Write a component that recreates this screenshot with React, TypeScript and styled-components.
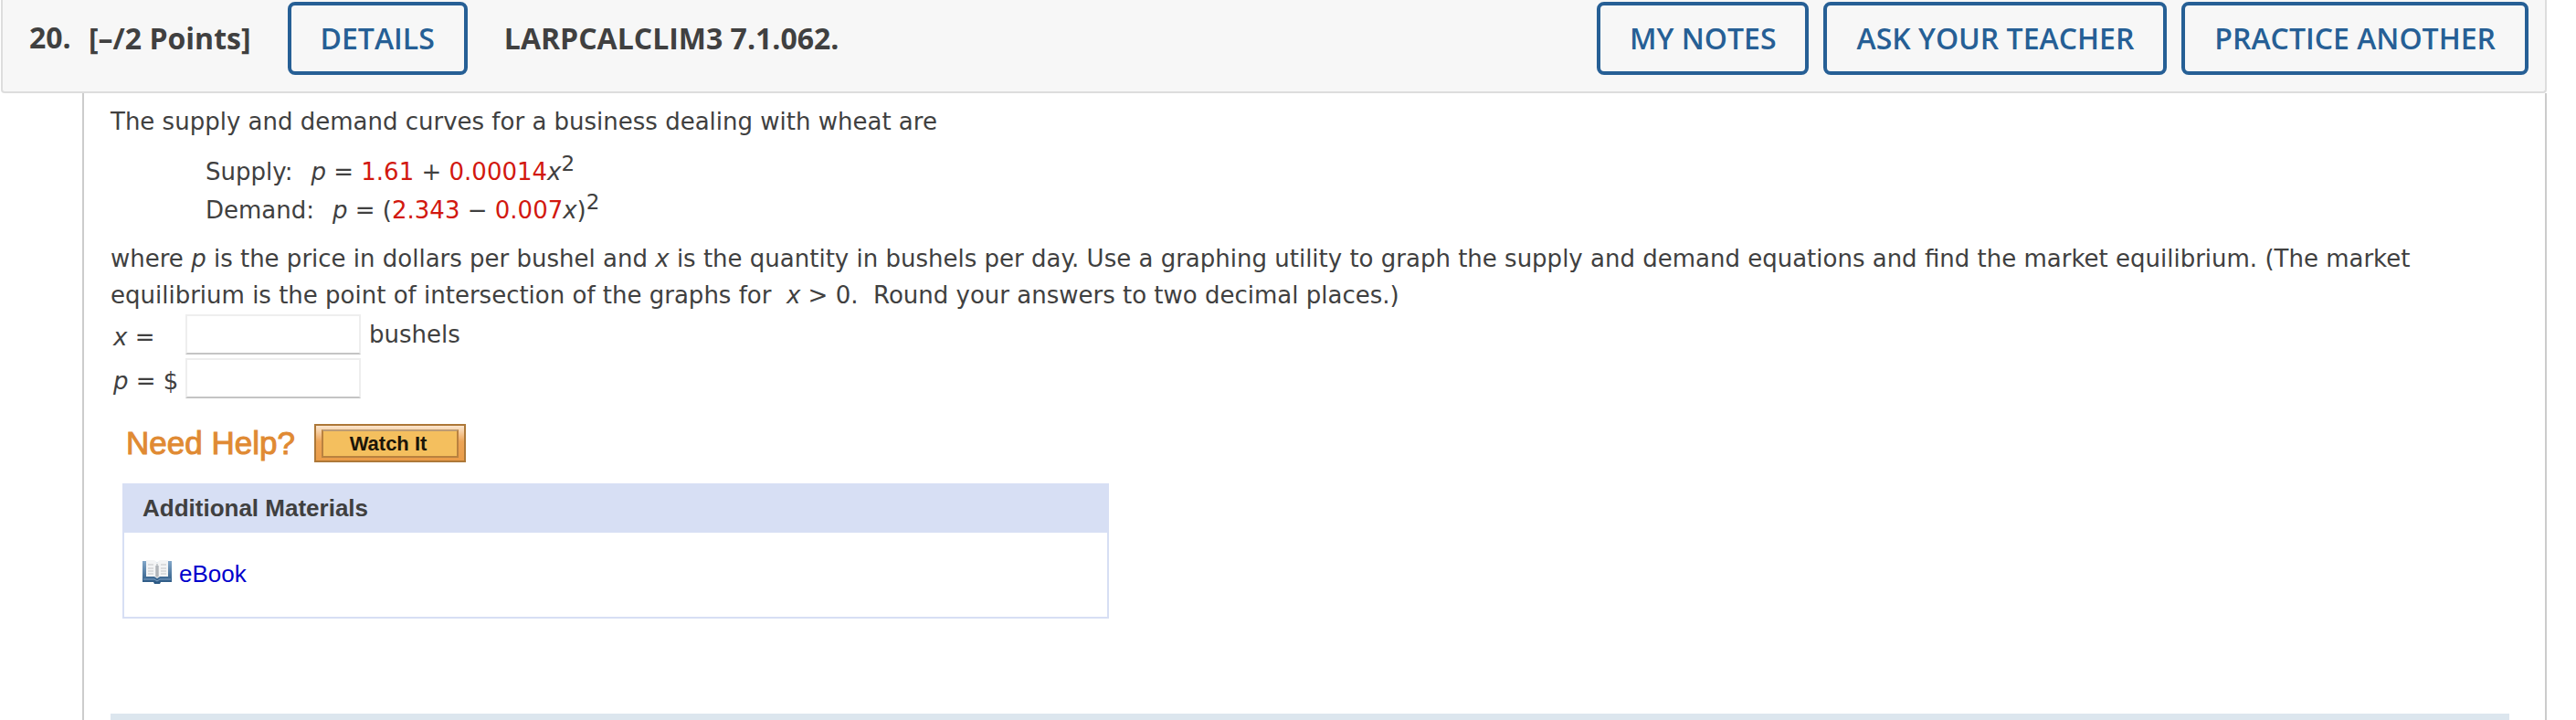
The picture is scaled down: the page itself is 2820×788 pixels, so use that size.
import React from "react";
import styled, { createGlobalStyle } from "styled-components";

const GlobalStyle = createGlobalStyle`
  * { box-sizing: border-box; }
  body { margin: 0; background: #fff; }
`;

const Page = styled.main`
  padding: 0 32px 0 1px;
  color: #404040;
  font-family: Verdana, "DejaVu Sans", sans-serif;
  font-size: 26px;
  line-height: 40px;
`;

const Header = styled.header`
  display: flex;
  align-items: flex-start;
  min-height: 102px;
  padding: 2px 18px 18px 29px;
  background: #f7f7f7;
  border: 2px solid #ddd;
  border-top: 0;
  border-radius: 0 0 4px 4px;
  font-family: "Open Sans", sans-serif;
  font-size: 32px;
  font-weight: 700;
  line-height: 80px;
`;

const Number = styled.span`
  width: 65px;
  line-height: 78px;
`;

const Points = styled.span`
  margin-right: 40px;
`;

const Code = styled.h1`
  flex: 1;
  margin: 0 0 0 40px;
  font-size: inherit;
`;

const Actions = styled.nav`
  display: flex;
  gap: 16px;
`;

const OutlineButton = styled.button`
  height: 80px;
  padding: 0 32px;
  background: transparent;
  border: 4px solid #265f95;
  border-radius: 8px;
  color: #265f95;
  font: 600 32px/72px "Open Sans", sans-serif;
  white-space: nowrap;
`;

const Question = styled.section`
  margin-left: 89px;
  padding: 11px 39px 0 29px;
  border: 2px solid #ccc;
  border-width: 0 2px;
`;

const Paragraph = styled.p`
  margin: 0;
`;

const Equations = styled.div`
  margin: 14px 0 12px 104px;
  line-height: 42px;
`;

const EquationName = styled.span`
  margin-right: 20px;
`;

const Value = styled.span`
  color: #d2180f;
`;

const Power = styled.sup`
  font-size: 23px;
  line-height: 0;
  vertical-align: 10px;
`;

const Answers = styled.div`
  display: grid;
  grid-template-columns: 80px 192px auto;
  justify-content: start;
  row-gap: 4px;
  padding: 1px 0 0 2px;
`;

const AnswerLabel = styled.label`
  padding: 6px 0 0 1px;
  line-height: 38px;
  white-space: pre;
`;

const AnswerInput = styled.input`
  width: 100%;
  height: 44px;
  padding: 0 8px;
  background: #fff;
  border: 2px solid #eee;
  border-bottom-color: #c4c4c4;
  font: inherit;
`;

const Unit = styled.span`
  padding: 2px 0 0 9px;
`;

const Help = styled.div`
  display: flex;
  align-items: center;
  margin: 28px 0 23px 16px;
`;

const HelpTitle = styled.h2`
  width: 207px;
  margin: 0;
  padding-left: 1px;
  color: #e08a33;
  font: 400 35px/40px "Liberation Sans", Arial, sans-serif;
  -webkit-text-stroke: 1px #e08a33;
  white-space: nowrap;
`;

const WatchButton = styled.button`
  width: 166px;
  height: 42px;
  padding: 4px 6px;
  background: linear-gradient(#fbe6cf, #eda557 45%, #ea9c48);
  border: 2px solid #ad7838;
  color: #1c1508;
  font: 700 22px/26px "Liberation Sans", Arial, sans-serif;
`;

const WatchFace = styled.span`
  display: block;
  padding: 1px 4px 0 0;
  background: #f4bf5e;
  border: 2px solid #b9813f;
  border-top-color: #bd9c74;
`;

const Materials = styled.section`
  max-width: 1080px;
  margin-left: 13px;
  border: 2px solid #d7dff4;
  font-family: "Liberation Sans", Arial, sans-serif;
`;

const MaterialsTitle = styled.h3`
  margin: 0;
  padding: 5px 20px 7px;
  background: #d7dff4;
  font-size: 26px;
`;

const MaterialsBody = styled.div`
  display: flex;
  padding: 25px 20px 27px;
`;

const BookLink = styled.a`
  display: flex;
  align-items: center;
  gap: 8px;
  color: #0000cc;
  text-decoration: none;

  svg {
    margin-bottom: 4px;
  }
`;

const Divider = styled.hr`
  height: 7px;
  margin: 104px 0 0;
  background: #dce6ee;
  border: 0;
`;

const BookIcon = () => (
  <svg width="32" height="28" viewBox="0 0 32 28" aria-hidden="true">
    <defs>
      <linearGradient id="cover" x1="0" y1="0" x2="0" y2="1">
        <stop offset="0" stopColor="#83a7c9" />
        <stop offset="1" stopColor="#275581" />
      </linearGradient>
    </defs>
    <path d="M0 2h13l3 2 3-2h13v23H20l-1 2h-6l-1-2H0z" fill="url(#cover)" />
    <path d="M4 1h9l3 3 3-3h9v18h-9l-3 2-3-2H4z" fill="#f3f4f5" />
    <path d="M1 22h12l3 2 3-2h12" fill="none" stroke="#7ea0c2" strokeWidth="1" />
    <path d="M14 7h4v12l-2 1-2-1z" fill="#c3c6ca" />
    <path d="M16 5v14" stroke="#9da3a8" strokeWidth="1" />
    <path d="M6 6h6M6 10h6M6 13h6M6 16h6M20 6h6M20 10h6M20 13h6M20 16h6" stroke="#c2c4c7" strokeWidth="1" />
  </svg>
);

export default function App() {
  return (
    <>
      <GlobalStyle />
      <Page>
        <Header>
          <Number>20.</Number>
          <Points>[–/2 Points]</Points>
          <OutlineButton type="button">DETAILS</OutlineButton>
          <Code>LARPCALCLIM3 7.1.062.</Code>
          <Actions aria-label="Question tools">
            <OutlineButton type="button">MY NOTES</OutlineButton>
            <OutlineButton type="button">ASK YOUR TEACHER</OutlineButton>
            <OutlineButton type="button">PRACTICE ANOTHER</OutlineButton>
          </Actions>
        </Header>
        <Question>
          <Paragraph>The supply and demand curves for a business dealing with wheat are</Paragraph>
          <Equations>
            <div>
              <EquationName>Supply:</EquationName>
              <i>p</i> = <Value>1.61</Value> + <Value>0.00014</Value><i>x</i><Power>2</Power>
            </div>
            <div>
              <EquationName>Demand:</EquationName>
              <i>p</i> = (<Value>2.343</Value> − <Value>0.007</Value><i>x</i>)<Power>2</Power>
            </div>
          </Equations>
          <Paragraph>
            where <i>p</i> is the price in dollars per bushel and <i>x</i> is the quantity in bushels per day. Use a
            graphing utility to graph the supply and demand equations and find the market equilibrium. (The market
            equilibrium is the point of intersection of the graphs for &nbsp;<i>x</i> &gt; 0.&nbsp; Round your answers
            to two decimal places.)
          </Paragraph>
          <Answers>
            <AnswerLabel htmlFor="quantity"><i>x</i> =</AnswerLabel>
            <AnswerInput id="quantity" type="text" />
            <Unit>bushels</Unit>
            <AnswerLabel htmlFor="price"><i>p</i> = $</AnswerLabel>
            <AnswerInput id="price" type="text" />
          </Answers>
          <Help>
            <HelpTitle>Need Help?</HelpTitle>
            <WatchButton type="button"><WatchFace>Watch It</WatchFace></WatchButton>
          </Help>
          <Materials>
            <MaterialsTitle>Additional Materials</MaterialsTitle>
            <MaterialsBody>
              <BookLink href="#ebook"><BookIcon />eBook</BookLink>
            </MaterialsBody>
          </Materials>
          <Divider />
        </Question>
      </Page>
    </>
  );
}
